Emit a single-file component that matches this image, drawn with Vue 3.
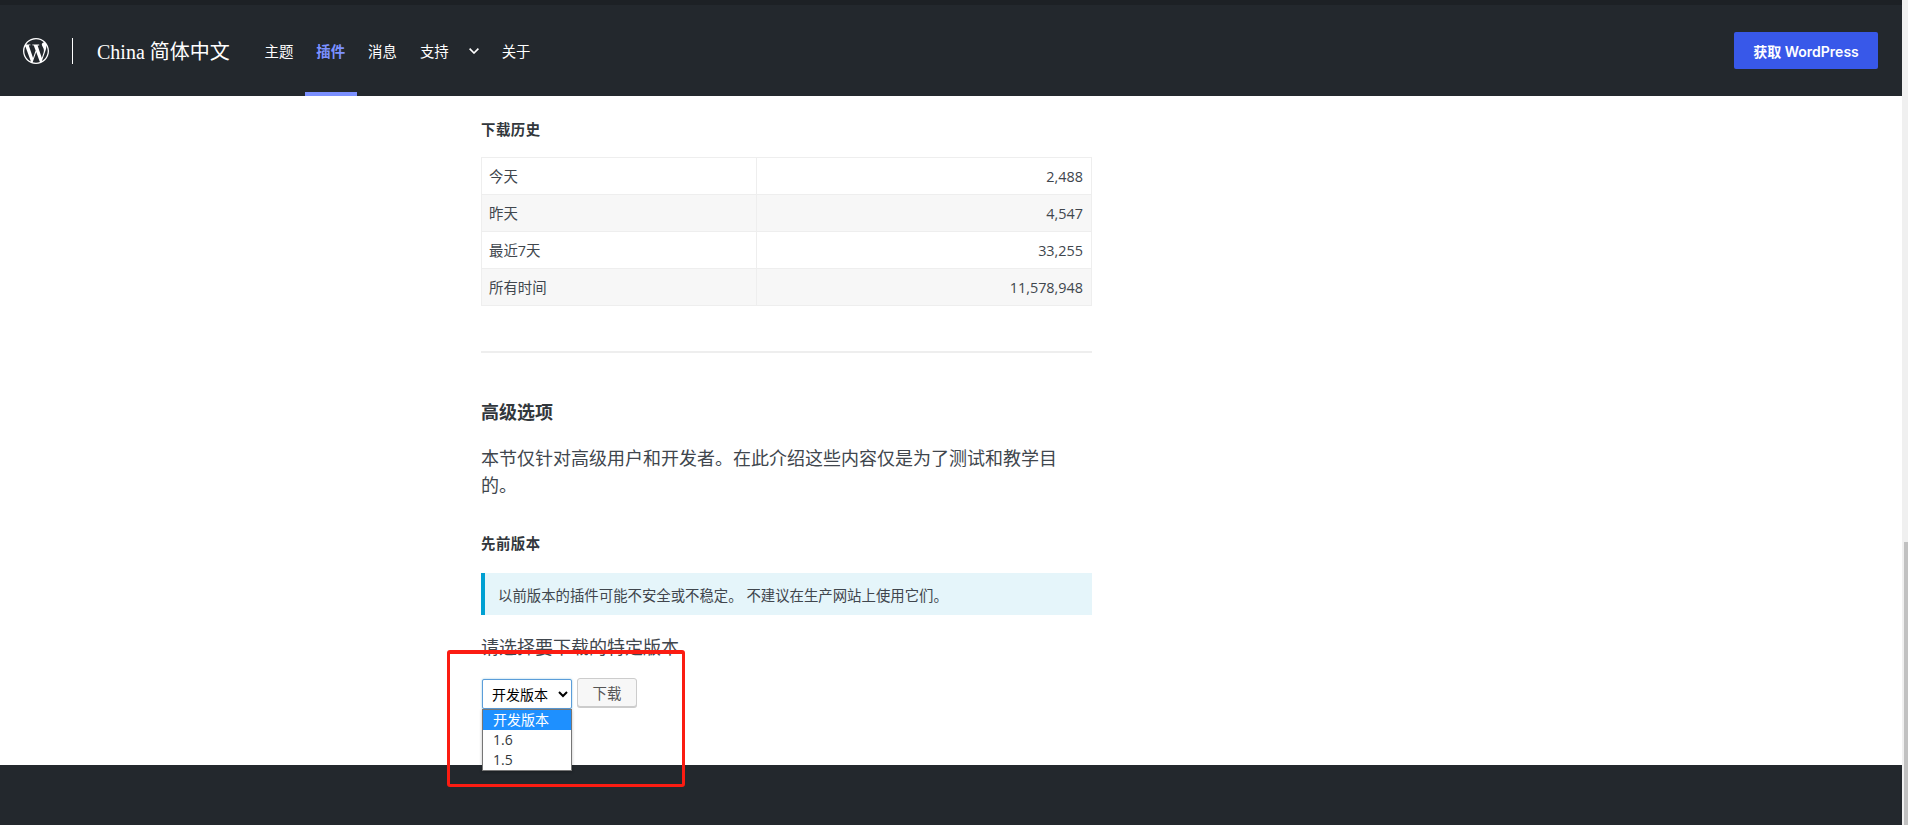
<script setup>
const nav = ['主题', '插件', '消息', '支持']
const rows = [
  ['今天', '2,488'],
  ['昨天', '4,547'],
  ['最近7天', '33,255'],
  ['所有时间', '11,578,948'],
]
</script>

<template>
  <div class="shell">
    <div class="page">
      <div class="topstrip"></div>
      <header class="header">
        <div class="brand">
          <svg class="logo" viewBox="0 0 24 24" fill="#fff"><path d="M21.469 6.825c.84 1.537 1.318 3.3 1.318 5.175 0 3.979-2.156 7.456-5.363 9.325l3.295-9.527c.615-1.54.82-2.771.82-3.864 0-.405-.026-.78-.07-1.11m-7.981.105c.647-.03 1.232-.105 1.232-.105.582-.075.514-.93-.067-.899 0 0-1.755.135-2.88.135-1.064 0-2.85-.15-2.85-.15-.585-.03-.661.855-.075.885 0 0 .54.061 1.125.09l1.68 4.605-2.37 7.08L5.354 6.9c.649-.03 1.234-.1 1.234-.1.585-.075.516-.93-.065-.896 0 0-1.746.138-2.874.138-.2 0-.438-.008-.69-.015C4.911 3.15 8.235 1.215 12 1.215c2.809 0 5.365 1.072 7.286 2.833-.046-.003-.091-.009-.141-.009-1.06 0-1.812.923-1.812 1.914 0 .89.513 1.643 1.06 2.531.411.72.89 1.643.89 2.977 0 .915-.354 1.994-.821 3.479l-1.075 3.585-3.9-11.61.001.014zM12 22.784c-1.059 0-2.081-.153-3.048-.437l3.237-9.406 3.315 9.087c.024.053.05.101.078.149-1.12.393-2.325.609-3.582.609M1.211 12c0-1.564.336-3.05.935-4.39L7.29 21.709C3.694 19.96 1.212 16.271 1.211 12M12 0C5.385 0 0 5.385 0 12s5.385 12 12 12 12-5.385 12-12S18.615 0 12 0"/></svg>
          <span class="sep"></span>
          <span class="site">China 简体中文</span>
          <nav class="nav">
            <a v-for="item in nav" :key="item" class="nav-item" :class="{ active: item === '插件' }">{{ item }}</a>
            <span class="chev">
              <svg width="10" height="6" viewBox="0 0 10 6" fill="none" stroke="#fff" stroke-width="1.6"><path d="M.6.6 5 5l4.4-4.4"/></svg>
            </span>
            <a class="nav-item">关于</a>
          </nav>
        </div>
        <a class="get">获取 WordPress</a>
      </header>

      <main class="main">
        <div class="column">
          <h4 class="minor first">下载历史</h4>
          <table class="stats">
            <tbody>
              <tr v-for="r in rows" :key="r[0]">
                <th>{{ r[0] }}</th>
                <td>{{ r[1] }}</td>
              </tr>
            </tbody>
          </table>
          <div class="rule"></div>
          <h3 class="major">高级选项</h3>
          <p class="lead">本节仅针对高级用户和开发者。在此介绍这些内容仅是为了测试和教学目的。</p>
          <h4 class="minor prev">先前版本</h4>
          <div class="notice">以前版本的插件可能不安全或不稳定。 不建议在生产网站上使用它们。</div>
          <p class="choose">请选择要下载的特定版本</p>
          <div class="form">
            <select class="version">
              <option>开发版本</option>
              <option>1.6</option>
              <option>1.5</option>
            </select>
            <button class="dl" type="button">下载</button>
            <ul class="menu">
              <li class="on">开发版本</li>
              <li>1.6</li>
              <li>1.5</li>
            </ul>
            <div class="mark"></div>
          </div>
        </div>
      </main>

      <footer class="footer"></footer>
    </div>
    <div class="scrollbar"><div class="thumb"></div></div>
  </div>
</template>

<style>
html, body { margin: 0; overflow: hidden; background: #fff; }
</style>

<style scoped>
.shell {
  display: flex;
  height: 100vh;
  font-family: "Open Sans", "Noto Sans CJK SC", sans-serif;
  color: #32373c;
}
.page { flex: 1; min-width: 0; display: flex; flex-direction: column; }
.topstrip { height: 5px; background: #1d2125; }
.header {
  height: 91px;
  background: #23282d;
  display: flex;
  align-items: center;
  justify-content: space-between;
  padding: 0 24px 0 23px;
}
.brand { display: flex; align-items: center; height: 100%; }
.logo { width: 26px; height: 26px; display: block; }
.sep { width: 1px; height: 26px; background: #fff; margin: 0 24px 0 23px; }
.site {
  font-family: "Liberation Serif", "Noto Sans CJK SC", serif;
  font-size: 20px;
  color: #fff;
  width: 145px;
  white-space: nowrap;
}
.nav { display: flex; align-items: center; height: 100%; margin-left: 11px; }
.nav-item {
  position: relative;
  display: flex;
  align-items: center;
  height: 100%;
  padding: 0 11.5px;
  font-size: 14.4px;
  color: #fff;
}
.nav-item.active { color: #7b90ff; font-weight: 700; }
.nav-item.active::after {
  content: "";
  position: absolute;
  left: 0;
  right: 0;
  bottom: 0;
  height: 4px;
  background: #7b90ff;
}
.chev { width: 30px; display: flex; align-items: center; justify-content: center; margin-left: -1px; margin-right: 1px; }
.get {
  width: 144px;
  height: 37px;
  background: #3858e9;
  border-radius: 2px;
  color: #fff;
  font-family: Inter, "Noto Sans CJK SC", sans-serif;
  font-size: 14px;
  font-weight: 600;
  display: flex;
  align-items: center;
  justify-content: center;
}
.main { flex: 1; min-height: 0; background: #fff; padding-left: 481px; }
.column { width: 611px; }
.minor {
  margin: 0;
  font-size: 14.4px;
  line-height: 21px;
  font-weight: 700;
  letter-spacing: 0.5px;
  color: #32373c;
}
.first { padding-top: 23px; }
.stats {
  width: 100%;
  margin-top: 17px;
  border-collapse: collapse;
  table-layout: fixed;
  font-size: 14.4px;
}
.stats th, .stats td {
  height: 36px;
  padding: 0 8px 0 7px;
  border: 1px solid #eee;
  font-weight: 400;
  color: #40464d;
}
.stats th { width: 259px; height: 35px; padding-bottom: 1px; text-align: left; }
.stats td { text-align: right; }
.stats tr:nth-child(even) { background: #f7f7f7; }
.rule { height: 2px; background: #eee; margin-top: 45px; }
.major {
  margin: 46px 0 0;
  font-size: 18px;
  line-height: 27px;
  font-weight: 700;
  color: #32373c;
}
.lead {
  margin: 19px 0 0;
  font-size: 18px;
  line-height: 27px;
  color: #40464d;
}
.prev { margin-top: 34px; }
.notice {
  margin-top: 19px;
  height: 42px;
  box-sizing: border-box;
  border-left: 4px solid #00a0d2;
  background: #e5f5fa;
  padding-left: 13px;
  display: flex;
  align-items: center;
  font-size: 14.4px;
  color: #40464d;
  white-space: pre;
}
.choose {
  margin: 19px 0 0;
  font-size: 18px;
  line-height: 27px;
  color: #40464d;
}
.form {
  position: relative;
  margin-top: 18px;
  display: flex;
  align-items: flex-start;
  gap: 5px;
}
.version {
  width: 90px;
  height: 30px;
  margin: 0 0 0 1px;
  box-sizing: border-box;
  border: 1px solid #5b9dd9;
  border-radius: 2px;
  background-color: #fff;
  color: #000;
  font-family: inherit;
  font-size: 14px;
  padding: 0 0 0 5px;
  box-shadow: 0 0 2px rgba(30, 140, 190, 0.5);
  outline: none;
}
.dl {
  width: 60px;
  height: 29px;
  margin-top: -1px;
  box-sizing: border-box;
  border: 1px solid #ccc;
  border-radius: 3px;
  background: #f7f7f7;
  box-shadow: 0 1px 0 #ccc;
  color: #555;
  font-family: inherit;
  font-size: 14.4px;
  padding: 0;
}
.menu {
  position: absolute;
  left: 1px;
  top: 30px;
  width: 90px;
  box-sizing: border-box;
  margin: 0;
  padding: 0;
  list-style: none;
  background: #fff;
  border: 1px solid #767676;
  box-shadow: 0 1px 3px rgba(0, 0, 0, 0.25);
  font-size: 14px;
  color: #32373c;
}
.menu li { height: 20px; line-height: 20px; padding-left: 10px; }
.menu li.on { background: #1e90ff; color: #fff; }
.mark {
  position: absolute;
  left: -34px;
  top: -29px;
  width: 238px;
  height: 137px;
  box-sizing: border-box;
  border: 3px solid #fb1c12;
  border-top-width: 4px;
  border-radius: 3px;
  pointer-events: none;
}
.footer { height: 60px; background: #23282d; }
.scrollbar { width: 6px; background: #f0f0f0; padding-left: 2px; box-sizing: border-box; }
.thumb { margin-top: 542px; height: 283px; background: #c1c1c1; }
</style>
